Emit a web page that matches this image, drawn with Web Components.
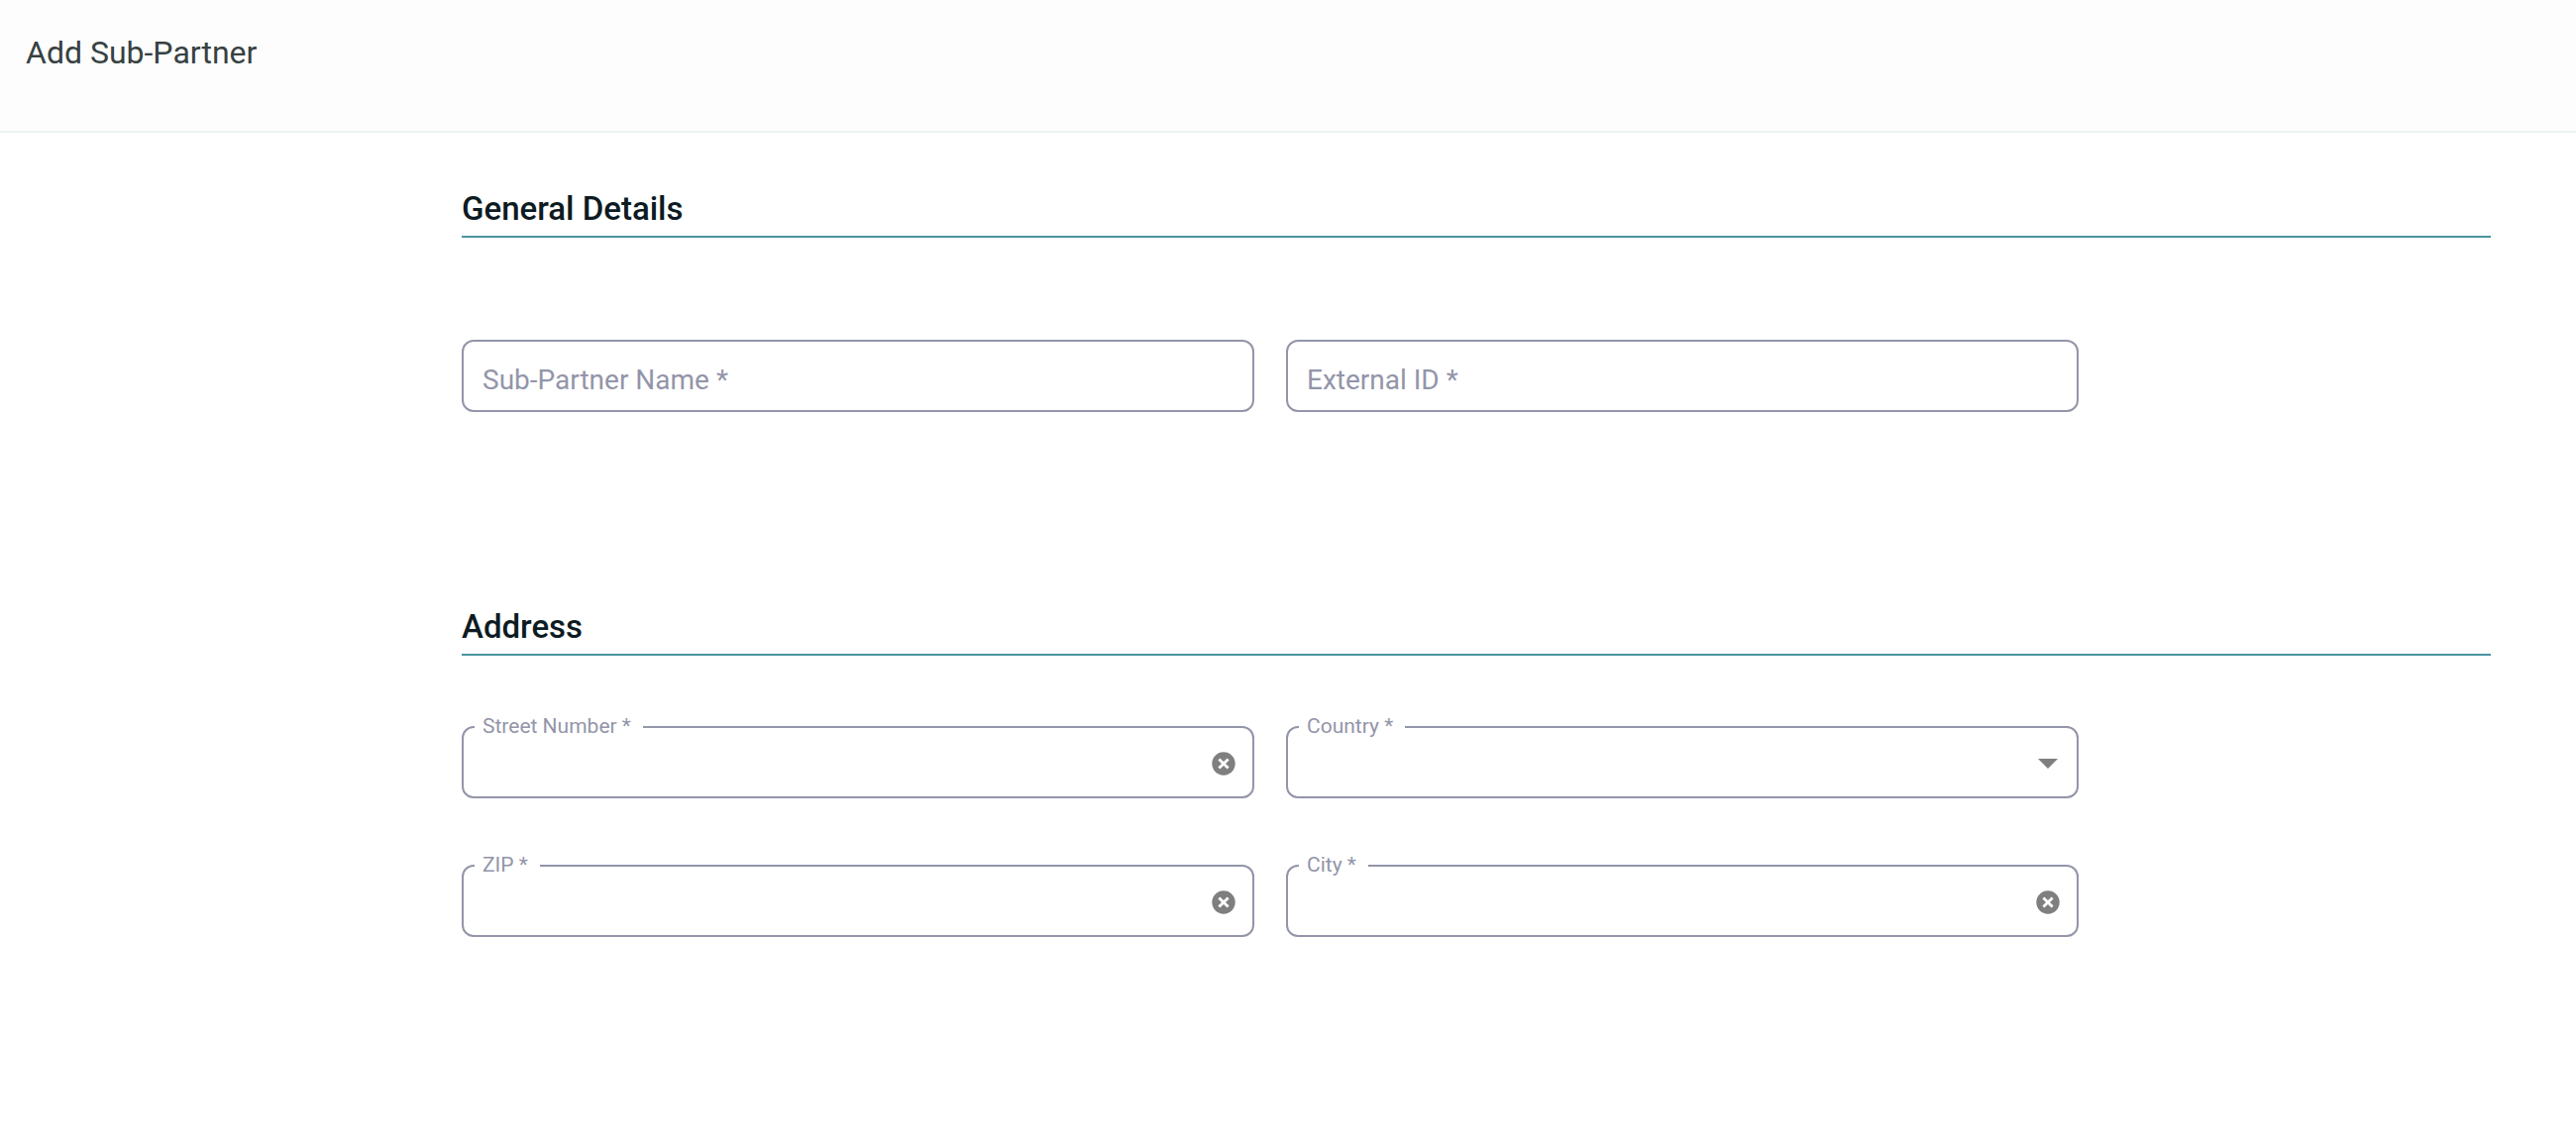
<!DOCTYPE html>
<html>
<head>
<meta charset="utf-8">
<title>Add Sub-Partner</title>
<style>
html, body {
	margin: 0;
	background: #fff;
	font-family: Roboto, "Liberation Sans", sans-serif;
}
main {
	display: block;
	padding: 56px 86px 0 466px;
}
</style>
</head>
<body>

<page-header>Add Sub-Partner</page-header>

<main>
	<form-section heading="General Details" gap="103">
		<form-field label="Sub-Partner Name *"></form-field>
		<form-field label="External ID *"></form-field>
	</form-section>

	<form-section heading="Address" gap="71" style="margin-top: 196px">
		<form-field label="Street Number *" floating clearable></form-field>
		<form-field label="Country *" floating dropdown></form-field>
		<form-field label="ZIP *" floating clearable></form-field>
		<form-field label="City *" floating clearable></form-field>
	</form-section>
</main>

<script>
class PageHeader extends HTMLElement {
	constructor() {
		super();
		this.attachShadow({ mode: 'open' }).innerHTML = `
			<style>
				:host {
					display: block;
					box-sizing: border-box;
					height: 134px;
					padding: 30px 26px 0;
					background: #fdfdfd;
					border-bottom: 2px solid #edf2f1;
					color: #374142;
					font-size: 32px;
					line-height: 46px;
				}
			</style>
			<slot></slot>`;
	}
}

class FormSection extends HTMLElement {
	constructor() {
		super();
		const root = this.attachShadow({ mode: 'open' });
		root.innerHTML = `
			<style>
				:host { display: block; }
				h2 {
					margin: 0;
					height: 48px;
					line-height: 42px;
					font-size: 33px;
					font-weight: 500;
					color: #0d1b22;
					border-bottom: 2px solid #4a93a0;
				}
				.fields {
					display: grid;
					grid-template-columns: 800px 800px;
					column-gap: 32px;
					row-gap: 67px;
				}
			</style>
			<h2></h2>
			<div class="fields"><slot></slot></div>`;
		root.querySelector('h2').textContent = this.getAttribute('heading');
		root.querySelector('.fields').style.marginTop = this.getAttribute('gap') + 'px';
	}
}

class FormField extends HTMLElement {
	constructor() {
		super();
		const root = this.attachShadow({ mode: 'open' });
		const label = this.getAttribute('label');
		const floating = this.hasAttribute('floating');

		let icon = '';
		if (this.hasAttribute('clearable')) {
			icon = `<svg class="clear" viewBox="0 0 24 24" width="24" height="24">
				<circle cx="12" cy="12" r="11.7" fill="#7f7f7f"/>
				<path d="M7.4 7.4 16.6 16.6M16.6 7.4 7.4 16.6" stroke="#fff" stroke-width="2.8" fill="none"/>
			</svg>`;
		} else if (this.hasAttribute('dropdown')) {
			icon = `<svg class="arrow" viewBox="0 0 20 10" width="20" height="10">
				<path d="M0 0H20L10 10Z" fill="#7f7f7f"/>
			</svg>`;
		}

		root.innerHTML = `
			<style>
				:host { display: block; }
				fieldset {
					box-sizing: border-box;
					display: flex;
					align-items: center;
					height: 73px;
					margin: 0;
					padding: 0 17px 0 19px;
					min-width: 0;
					border: 2px solid #9395a9;
					border-radius: 12px;
				}
				legend {
					height: 2px;
					margin-left: -8px;
					padding: 0 12px 0 8px;
					line-height: 0;
					font-size: 21px;
					color: #9395a9;
					white-space: nowrap;
				}
				.placeholder {
					padding-top: 7px;
					font-size: 28px;
					color: #9395a9;
					white-space: nowrap;
				}
				input {
					flex: 1;
					min-width: 0;
					border: 0;
					outline: 0;
					padding: 0;
					background: none;
					font: inherit;
				}
				svg { flex: none; display: block; }
				.clear { margin-top: 2px; }
				.arrow { margin: 2px 2px 0 0; }
			</style>
			<fieldset>
				${floating ? '<legend></legend>' : '<span class="placeholder"></span>'}
				<input type="text">
				${icon}
			</fieldset>`;
		root.querySelector(floating ? 'legend' : '.placeholder').textContent = label;
	}
}

customElements.define('page-header', PageHeader);
customElements.define('form-section', FormSection);
customElements.define('form-field', FormField);
</script>
</body>
</html>
